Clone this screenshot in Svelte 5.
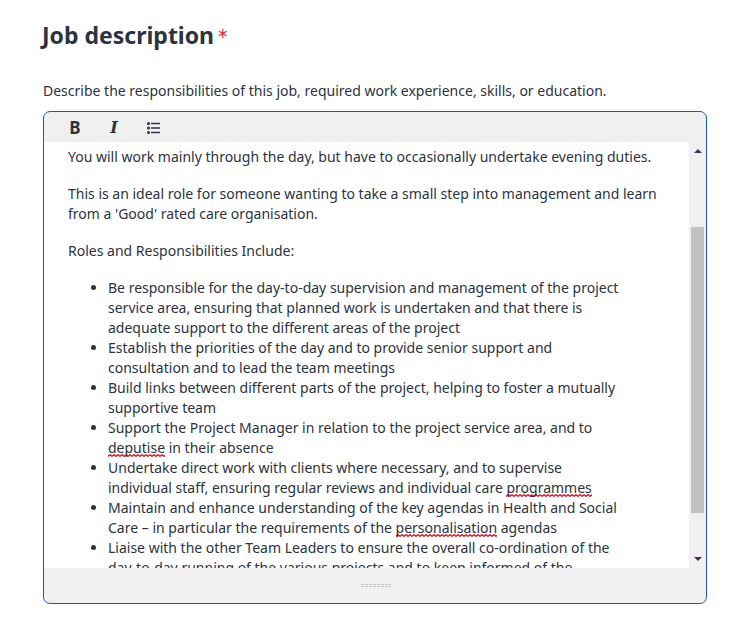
<script>
	const items = [
		['Be responsible for the day-to-day supervision and management of the project', 'service area, ensuring that planned work is undertaken and that there is', 'adequate support to the different areas of the project'],
		['Establish the priorities of the day and to provide senior support and', 'consultation and to lead the team meetings'],
		['Build links between different parts of the project, helping to foster a mutually', 'supportive team'],
		['Support the Project Manager in relation to the project service area, and to', '<u>deputise</u> in their absence'],
		['Undertake direct work with clients where necessary, and to supervise', 'individual staff, ensuring regular reviews and individual care <u>programmes</u>'],
		['Maintain and enhance understanding of the key agendas in Health and Social', 'Care – in particular the requirements of the <u>personalisation</u> agendas'],
		['Liaise with the other Team Leaders to ensure the overall co-ordination of the', 'day-to-day running of the various projects and to keep informed of the']
	];
</script>

<main class="field">
	<h2>Job description<span class="req">*</span></h2>
	<p class="hint">Describe the responsibilities of this job, required work experience, skills, or education.</p>

	<div class="editor">
		<div class="toolbar">
			<button class="bold">B</button>
			<button class="italic">I</button>
			<button aria-label="List">
				<svg width="13" height="12" viewBox="0 0 13 12">
					<path d="M4 1.5h9M4 6h9M4 10.5h9" stroke="#2b3340" stroke-width="1.6" />
					<circle cx="1.5" cy="1.5" r="1.5" fill="#2b3340" />
					<circle cx="1.5" cy="6" r="1.5" fill="#2b3340" />
					<circle cx="1.5" cy="10.5" r="1.5" fill="#2b3340" />
				</svg>
			</button>
		</div>

		<div class="body">
			<div class="content">
				<p>You will work mainly through the day, but have to occasionally undertake evening duties.</p>
				<p>This is an ideal role for someone wanting to take a small step into management and learn<br />from a 'Good' rated care organisation.</p>
				<p>Roles and Responsibilities Include:</p>
				<ul>
					{#each items as lines}
						<li>
							{#each lines as line, i}
								{#if i > 0}<br />{/if}{@html line}
							{/each}
						</li>
					{/each}
				</ul>
			</div>
			<div class="scrollbar">
				<span class="arrow up"></span>
				<div class="track"><div class="thumb"></div></div>
				<span class="arrow down"></span>
			</div>
		</div>

		<div class="footer"><span class="grip"></span></div>
	</div>
</main>

<style>
	:global(body) {
		background: #fff;
	}

	.field {
		padding: 19px 33px 0 43px;
		font-family: 'Noto Sans', sans-serif;
		color: #2b3340;
	}

	h2 {
		margin: 0 0 0 -1px;
		font-size: 23px;
		line-height: 33px;
		font-weight: 700;
	}

	.req {
		margin-left: 4px;
		color: #e5202e;
		font-family: 'DejaVu Sans', sans-serif;
		font-weight: 400;
		font-size: 19px;
		vertical-align: 1px;
	}

	.hint {
		margin: 28px 0 0;
		font-size: 14px;
		line-height: 20px;
	}

	.editor {
		margin-top: 10px;
		height: 491px;
		border: 1px solid #1d5aa6;
		border-radius: 7px;
		background: #f0f0f0;
		display: flex;
		flex-direction: column;
		overflow: hidden;
	}

	.toolbar {
		height: 30px;
		box-sizing: border-box;
		flex: none;
		display: flex;
		align-items: center;
		padding: 1px 0 0 21px;
		gap: 19px;
	}

	.toolbar button {
		width: 20px;
		height: 20px;
		padding: 0;
		border: 0;
		background: none;
		color: #2b3340;
		font-size: 17px;
		line-height: 20px;
		display: flex;
		align-items: center;
		justify-content: center;
	}

	.bold {
		font-family: 'Noto Sans', sans-serif;
		font-weight: 700;
	}

	.toolbar .italic {
		font-family: 'DejaVu Serif', serif;
		font-style: italic;
		font-weight: 700;
		font-size: 16px;
	}

	.body {
		height: 426px;
		flex: none;
		display: flex;
	}

	.content {
		flex: 1;
		min-width: 0;
		overflow: hidden;
		background: #fff;
		padding-left: 24px;
		font-size: 14px;
		line-height: 20px;
		white-space: nowrap;
	}

	.content p {
		margin: 5px 0 17px;
	}

	.content p + p {
		margin-top: 0;
	}

	ul {
		margin: 0;
		padding-left: 40px;
	}

	/* spellcheck squiggle, tighter than text-decoration: wavy */
	.content :global(u) {
		text-decoration: none;
		background: url("data:image/svg+xml,%3Csvg xmlns='http://www.w3.org/2000/svg' width='4' height='3'%3E%3Cpath d='M0 2.5 1.5 1 2.5 1 4 2.5' fill='none' stroke='%23e8101e' stroke-width='1.4'/%3E%3C/svg%3E") repeat-x 0 100% / 4px 3px;
	}

	.scrollbar {
		width: 17px;
		flex: none;
		display: flex;
		flex-direction: column;
		align-items: center;
	}

	.arrow {
		flex: none;
		width: 0;
		height: 0;
		border-left: 4px solid transparent;
		border-right: 4px solid transparent;
	}

	.up {
		margin-top: 7px;
		border-bottom: 4px solid #4b2a5e;
	}

	.down {
		margin-bottom: 7px;
		border-top: 4px solid #4b2a5e;
	}

	.track {
		flex: 1;
		width: 13px;
		padding-top: 74px;
	}

	.thumb {
		height: 286px;
		background: #c1c1c1;
	}

	.footer {
		flex: 1;
		display: flex;
		justify-content: center;
		padding-top: 16px;
	}

	.grip {
		width: 30px;
		height: 3px;
		margin-left: 1px;
		background:
			repeating-linear-gradient(90deg, #c4c4c4 0 3px, #f0f0f0 3px 4px) top / 100% 1px no-repeat,
			repeating-linear-gradient(90deg, #c4c4c4 0 3px, #f0f0f0 3px 4px) bottom / 100% 1px no-repeat;
	}
</style>
